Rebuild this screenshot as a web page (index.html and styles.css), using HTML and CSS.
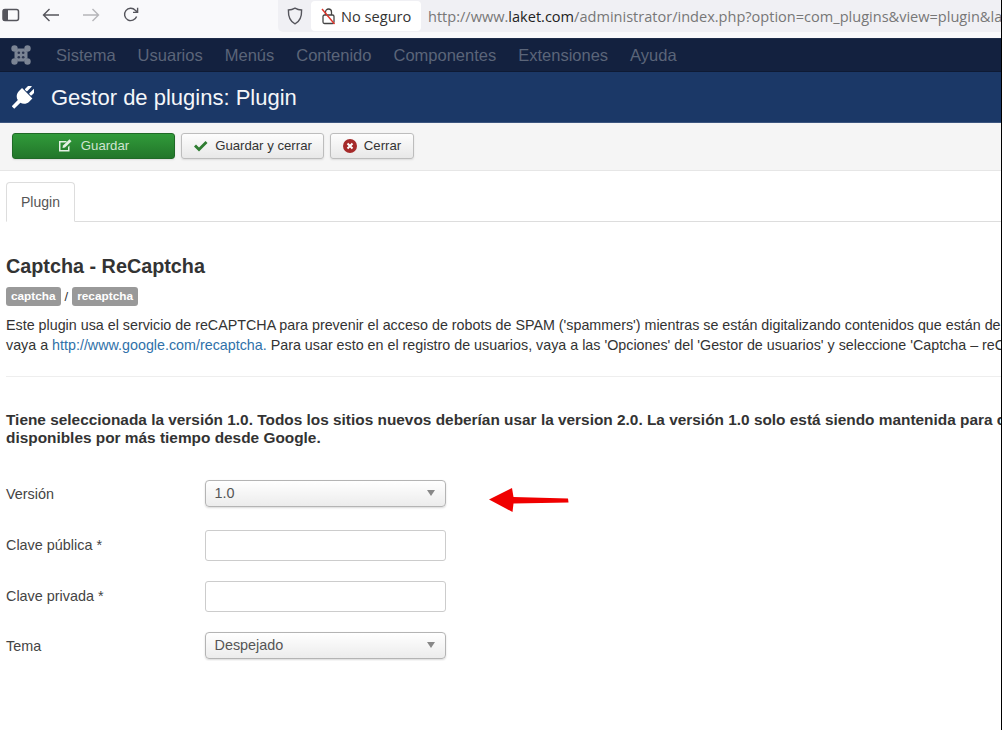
FILE: index.html
```html
<!DOCTYPE html>
<html lang="es">
<head>
<meta charset="utf-8">
<title>Gestor de plugins: Plugin</title>
<link rel="stylesheet" href="styles.css">
</head>
<body>
<div class="browser">
  <svg class="bicon sidebar" width="18" height="14" viewBox="0 0 18 14"><rect x="1" y="1.500" width="15.500" height="11" rx="2" fill="none" stroke="#55555c" stroke-width="1.500"/><rect x="1" y="1.500" width="5" height="11" fill="#55555c"/></svg>
  <svg class="bicon back" width="18" height="14" viewBox="0 0 18 14"><path d="M1.500 7H17M7.500 1L1.500 7l6 6" fill="none" stroke="#55555c" stroke-width="1.400"/></svg>
  <svg class="bicon fwd" width="18" height="14" viewBox="0 0 18 14"><path d="M16.500 7H1M10.500 1l6 6-6 6" fill="none" stroke="#b5b5b9" stroke-width="1.400"/></svg>
  <svg class="bicon reload" width="16" height="16" viewBox="0 0 16 16"><path d="M13.600 9.500A6.200 6.200 0 1 1 12.300 3.200L14.200 5M14.600 .8v4.600H10" fill="none" stroke="#55555c" stroke-width="1.400"/></svg>
  <div class="address">
    <svg class="shield" width="16" height="18" viewBox="0 0 16 18"><path d="M8 1.200c2 1.200 4.400 1.800 6.600 1.800 .2 6.500-1.600 11.500-6.600 13.800C3 14.500 1.200 9.500 1.400 3 3.600 3 6 2.400 8 1.200z" fill="none" stroke="#55555c" stroke-width="1.400"/></svg>
    <div class="secure">
      <svg width="15" height="18" viewBox="0 0 15 18"><rect x="2" y="8" width="11" height="8.500" rx="1.500" fill="none" stroke="#444" stroke-width="1.300"/><path d="M4.500 8V5a3 3 0 0 1 6 0v3" fill="none" stroke="#444" stroke-width="1.300"/><path d="M1 2l12.500 15" stroke="#e0352b" stroke-width="1.400"/></svg>
      <span>No seguro</span>
    </div>
    <span class="url">http://www.<b>laket.com</b>/administrator/index.php?option=com_plugins&amp;view=plugin&amp;la</span>
  </div>
</div>
<nav class="nav">
  <svg class="jlogo" width="20" height="20" viewBox="0 0 20 20"><path d="M3.500 6.500C5 6.500 6.500 5 6.500 3.500h7c0 1.500 1.500 3 3 3v7c-1.500 0-3 1.500-3 3h-7c0-1.500-1.500-3-3-3z" fill="#7b8494"/><g fill="#7b8494"><circle cx="3.500" cy="3.500" r="3.200"/><circle cx="16.500" cy="3.500" r="3.200"/><circle cx="3.500" cy="16.500" r="3.200"/><circle cx="16.500" cy="16.500" r="3.200"/></g><g fill="#2c3650"><circle cx="7.800" cy="7.800" r="1.300"/><circle cx="12.200" cy="7.800" r="1.300"/><circle cx="7.800" cy="12.200" r="1.300"/><circle cx="12.200" cy="12.200" r="1.300"/></g></svg>
  <ul class="menu">
    <li>Sistema</li><li>Usuarios</li><li>Menús</li><li>Contenido</li><li>Componentes</li><li>Extensiones</li><li>Ayuda</li>
  </ul>
</nav>
<header class="title">
  <svg width="22" height="23" viewBox="0 0 24 25"><g transform="rotate(45 12 12.500)" fill="#fff"><rect x="7" y="-3" width="3.400" height="8" rx="1"/><rect x="13.600" y="-3" width="3.400" height="8" rx="1"/><path d="M4 6h16v5c0 4-3 7-6 7.500V28h-4V18.500C7 18 4 15 4 11z"/></g></svg>
  <h1>Gestor de plugins: Plugin</h1>
</header>
<div class="toolbar">
  <button class="btn save">
    <svg width="14" height="13" viewBox="0 0 14 13"><path d="M1 2h8L7.500 3.500H2.500v7.500h7.500V8l1.500-1.500v6h-10.500z" fill="#e4f1e4"/><path d="M5 6.500l6.500-6.300 2 2L7 8.500 4.500 9z" fill="#e4f1e4"/></svg>
    Guardar
  </button>
  <button class="btn keep">
    <svg width="15" height="12" viewBox="0 0 15 12"><path d="M1 6.500l2-2 3 3L12.500 1l2 2L6 11.500z" fill="#2f7d32"/></svg>
    Guardar y cerrar
  </button>
  <button class="btn close">
    <svg width="14" height="14" viewBox="0 0 14 14"><circle cx="7" cy="7" r="7" fill="#a52a2a"/><path d="M4.500 4.500l5 5M9.500 4.500l-5 5" stroke="#fff" stroke-width="2"/></svg>
    Cerrar
  </button>
</div>
<main class="content">
  <div class="tabs"><div class="tab">Plugin</div></div>
  <h2>Captcha - ReCaptcha</h2>
  <div class="tags"><span class="tag">captcha</span> / <span class="tag">recaptcha</span></div>
  <p class="desc">Este plugin usa el servicio de reCAPTCHA para prevenir el acceso de robots de SPAM ('spammers') mientras se están digitalizando contenidos que están de<br>vaya a <a href="#">http://www.google.com/recaptcha.</a> Para usar esto en el registro de usuarios, vaya a las 'Opciones' del 'Gestor de usuarios' y seleccione 'Captcha – reC</p>
  <hr class="rule">
  <p class="notice">Tiene seleccionada la versión 1.0. Todos los sitios nuevos deberían usar la version 2.0. La versión 1.0 solo está siendo mantenida para c<br>disponibles por más tiempo desde Google.</p>
  <form class="form">
    <label class="first">Versión</label>
    <div class="select"><span>1.0</span><i class="caret"></i></div>
    <label>Clave pública *</label>
    <div class="input"></div>
    <label>Clave privada *</label>
    <div class="input"></div>
    <label>Tema</label>
    <div class="select"><span>Despejado</span><i class="caret"></i></div>
  </form>
  <svg class="arrow" width="82" height="28" viewBox="0 0 82 28"><path d="M1 13.500L24 2l1.500 9 54.500 1.500.5 4-55 1L24.500 26z" fill="#f00000"/></svg>
</main>
<div class="edge"></div>
</body>
</html>
```
FILE: styles.css
```css
* { box-sizing: border-box; }
html, body { margin: 0; padding: 0; height: 100%; overflow: hidden; background: #fff; }
body { font-family: "Liberation Sans", Arial, sans-serif; font-size: 14px; color: #333; width: 1002px; height: 730px; position: relative; }
.edge { position: absolute; right: 0; top: 0; bottom: 0; width: 1px; background: #000; }

.browser { height: 38px; background: #f9f9fb; display: flex; align-items: flex-start; }
.bicon { flex: none; margin-top: 8px; }
.sidebar { margin-left: 2px; }
.back { margin-left: 22px; }
.fwd { margin-left: 22px; }
.reload { margin-left: 23px; margin-top: 7px; }
.address { margin-left: 139px; flex: 1; height: 32px; background: #f0f0f4; border-radius: 0 0 0 5px; display: flex; align-items: center; padding-left: 9px; white-space: nowrap; overflow: hidden; }
.shield { flex: none; margin-top: -1px; }
.secure { margin-left: 8px; height: 30px; width: 110px; background: #fff; border-radius: 4px; display: flex; align-items: center; padding-left: 10px; gap: 5px; font-family: "Open Sans", sans-serif; font-size: 14.600px; color: #333; flex: none; }
.url { margin-left: 7px; font-family: "Open Sans", sans-serif; font-size: 14.550px; color: #777; }
.url b { font-weight: 400; color: #222; }

.nav { height: 34px; background: #13213f; border-top: 1px solid #1e2c4a; border-bottom: 1px solid #0e1a34; display: flex; align-items: center; padding-left: 11px; }
.jlogo { flex: none; }
.menu { list-style: none; margin: 0 0 0 25px; padding: 0; display: flex; gap: 22px; color: #5b6579; font-size: 16.500px; }

.title { height: 51px; background: #1b3867; display: flex; align-items: center; padding-left: 12px; border-bottom: 1px solid #3c557f; color: #fff; }
.title h1 { margin: 2px 0 0 17px; font-size: 22px; font-weight: 400; color: #f4f6f9; }

.toolbar { height: 48px; background: #f5f5f5; border-bottom: 1px solid #e6e6e6; display: flex; align-items: flex-start; padding: 10px 0 0 12px; gap: 6px; }
.btn { height: 26px; display: flex; align-items: center; justify-content: center; gap: 7px; padding: 0 0 1px; font: 13.200px "Liberation Sans", Arial, sans-serif; color: #333; background: linear-gradient(#fdfdfd, #e8e8e8); border: 1px solid #bdbdbd; border-radius: 3px; box-shadow: 0 1px 2px rgba(0,0,0,.1); }
.save { width: 163px; gap: 9px; background: linear-gradient(#319a3a, #22762a); border-color: #1f6a26; color: #cfe5d0; }
.keep { width: 143px; }
.close { width: 84px; }

.content { padding: 11px 0 0 6px; white-space: nowrap; overflow: hidden; }
.tabs { height: 40px; border-bottom: 1px solid #ddd; }
.tab { width: 69px; height: 40px; border: 1px solid #ddd; border-bottom-color: #fff; border-radius: 4px 4px 0 0; background: #fff; padding-top: 11px; text-align: center; color: #555; font-size: 14px; }
h2 { margin: 32px 0 0; font-size: 19.800px; line-height: 24px; font-weight: 700; color: #333; }
.tags { margin-top: 9px; height: 19px; display: flex; align-items: center; gap: 4px; font-size: 13px; }
.tag { background: #999; color: #fff; font-size: 11.800px; font-weight: 700; height: 19px; line-height: 19px; padding: 0 5px; border-radius: 3px; }
.desc { margin: 9px 0 0; font-size: 14.300px; line-height: 20px; color: #333; }
.desc a { color: #3071a9; text-decoration: none; }
.rule { margin: 21px 0 0; border: 0; border-top: 1px solid #eee; }
.notice { margin: 34px 0 0; font-size: 15.400px; line-height: 18px; font-weight: 700; color: #333; }

.form { display: grid; grid-template-columns: 198.500px 241.500px; grid-auto-rows: 31px; row-gap: 19.670px; margin-top: 31px; align-items: center; }
.form label { color: #444; font-size: 14.400px; margin-top: 2px; }
.form .first { margin-top: 0; }
.select { height: 27px; border: 1px solid #b4b4b4; border-radius: 4px; background: linear-gradient(#fff, #ececec); box-shadow: 0 1px 2px rgba(0,0,0,.15); display: flex; align-items: center; justify-content: space-between; padding: 0 10px 1px 9px; font-size: 14.400px; color: #555; }
.input { height: 31px; margin-top: 3px; border: 1px solid #ccc; border-radius: 3px; background: #fff; }
.caret { width: 0; height: 0; border-left: 4px solid transparent; border-right: 4px solid transparent; border-top: 6px solid #888; }
.arrow { position: absolute; left: 488px; top: 486px; }
```
